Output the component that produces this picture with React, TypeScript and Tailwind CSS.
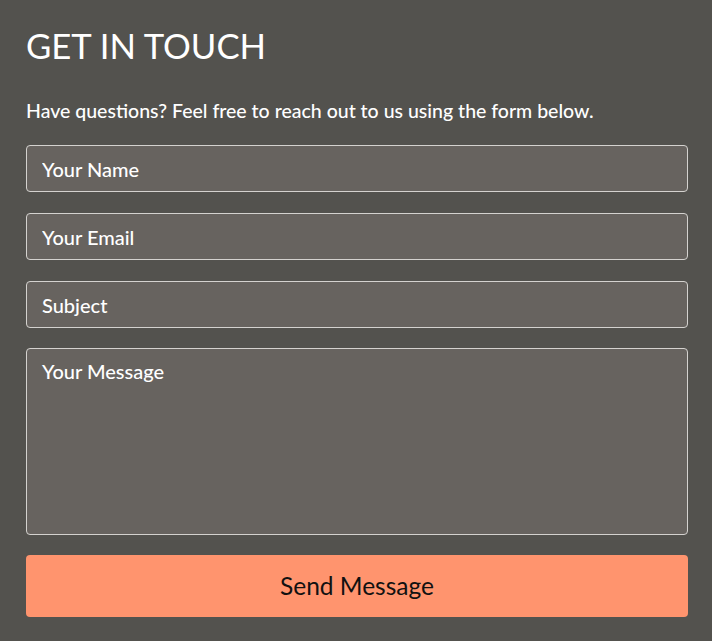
const fieldClass =
  'h-[47px] w-full rounded-[4px] border border-[#d4d2cf] bg-[#67635f] px-[15px] text-[20px] font-medium text-white placeholder:text-white outline-none';

export default function App() {
  return (
    <div
      className="min-h-[641px] w-full bg-[#53524e] pl-[26px] pr-[24px] pt-[25px] text-white"
      style={{ fontFamily: 'Lato, "Open Sans", sans-serif' }}
    >
      <h1 className="text-[34.7px] leading-[42px] font-normal">GET IN TOUCH</h1>
      <p className="mt-[31px] text-[19.5px] leading-[26px] font-medium">
        Have questions? Feel free to reach out to us using the form below.
      </p>

      <form className="mt-[21px] flex flex-col" onSubmit={(e) => e.preventDefault()}>
        <input type="text" placeholder="Your Name" className={fieldClass} />
        <input type="email" placeholder="Your Email" className={`${fieldClass} mt-[21px]`} />
        <input type="text" placeholder="Subject" className={`${fieldClass} mt-[21px]`} />
        <textarea
          placeholder="Your Message"
          className="mt-[20px] h-[187px] w-full resize-none rounded-[4px] border border-[#d4d2cf] bg-[#67635f] px-[15px] pt-[9px] text-[20px] leading-[26px] font-medium text-white placeholder:text-white outline-none"
        />
        <button
          type="submit"
          className="mt-[20px] h-[62px] w-full rounded-[4px] bg-[#ff946e] text-[24.5px] text-[#111]"
        >
          Send Message
        </button>
      </form>
    </div>
  );
}
